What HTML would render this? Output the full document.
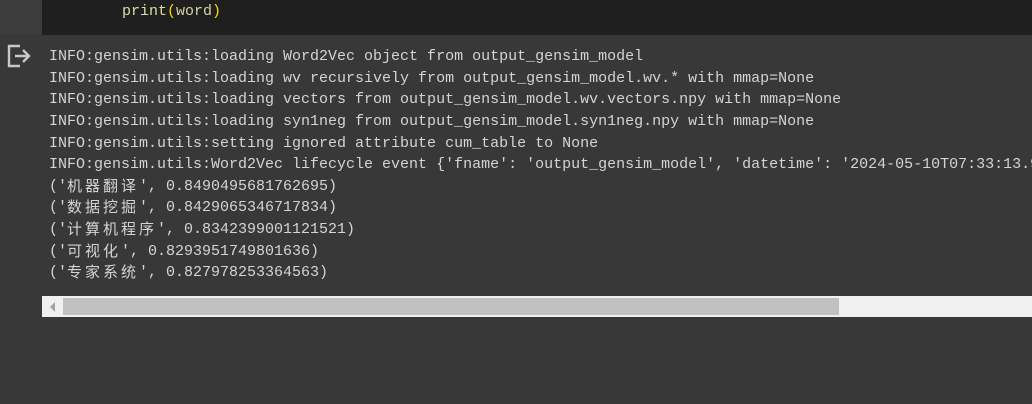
<!DOCTYPE html>
<html><head><meta charset="utf-8"><style>
html,body{margin:0;padding:0;width:1032px;height:404px;overflow:hidden;background:#383838;position:relative}
.gut{position:absolute;left:0;top:0;width:42px;height:35px;background:#3c3c3c}
.code{position:absolute;left:42px;top:0;width:990px;height:35px;background:#1f1f1f}
.code span{position:absolute;left:80px;top:1px;font:15px/22px "Liberation Mono","Noto Sans CJK SC",monospace;color:#dcdcaa;white-space:pre}
.out{position:absolute;left:49px;top:46px;font:15px/21.65px "Liberation Mono","Noto Sans CJK SC",monospace;color:#d4d4d4;white-space:pre}
.out div{height:21.65px}
.c{font-family:"Noto Sans CJK SC",sans-serif;letter-spacing:3px;line-height:1;display:inline-block;vertical-align:top;margin-top:2px;height:17px}
.track{position:absolute;left:42px;top:296px;width:990px;height:21px;background:#f0f0f0}
.thumb{position:absolute;left:63px;top:298px;width:776px;height:17px;background:#c1c1c1}
.arr{position:absolute;left:50px;top:302px;width:0;height:0;border-top:5px solid transparent;border-bottom:5px solid transparent;border-right:5px solid #a3a3a3}
</style></head><body>
<div class="gut"></div>
<div class="code"><span>print<span style="position:static;color:#ffd700">(</span><span style="position:static;color:#d4d4a0">word</span><span style="position:static;color:#ffd700">)</span></span></div>
<svg style="position:absolute;left:6px;top:44px" width="26" height="24" viewBox="0 0 26 24"><path d="M14 2H3v20h11" fill="none" stroke="#c8c8c8" stroke-width="2.4"/><path d="M9 12h14M17 6l6 6-6 6" fill="none" stroke="#c8c8c8" stroke-width="2.4"/></svg>
<div class="out"><div>INFO:gensim.utils:loading Word2Vec object from output_gensim_model</div><div>INFO:gensim.utils:loading wv recursively from output_gensim_model.wv.* with mmap=None</div><div>INFO:gensim.utils:loading vectors from output_gensim_model.wv.vectors.npy with mmap=None</div><div>INFO:gensim.utils:loading syn1neg from output_gensim_model.syn1neg.npy with mmap=None</div><div>INFO:gensim.utils:setting ignored attribute cum_table to None</div><div>INFO:gensim.utils:Word2Vec lifecycle event {'fname': 'output_gensim_model', 'datetime': '2024-05-10T07:33:13.9</div><div>('<span class="c">机器翻译</span>', 0.8490495681762695)</div><div>('<span class="c">数据挖掘</span>', 0.8429065346717834)</div><div>('<span class="c">计算机程序</span>', 0.8342399001121521)</div><div>('<span class="c">可视化</span>', 0.8293951749801636)</div><div>('<span class="c">专家系统</span>', 0.827978253364563)</div></div>
<div class="track"></div><div class="thumb"></div><div class="arr"></div>
</body></html>
